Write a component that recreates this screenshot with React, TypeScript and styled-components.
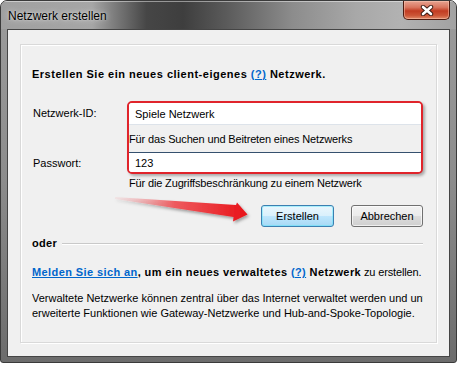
import React from "react";
import styled, { createGlobalStyle } from "styled-components";

const Global = createGlobalStyle`
  html, body { margin: 0; padding: 0; background: #ffffff; }
  body { font-family: "Liberation Sans", Arial, sans-serif; }
`;

const Window = styled.div`
  position: relative;
  box-sizing: border-box;
  width: 457px;
  height: 363px;
  border: 1px solid #3a3a3a;
  border-radius: 7px 7px 3px 3px;
  background: linear-gradient(180deg, #9c9c9c 0%, #8c8c8c 50%, #6c6c6c 100%);
  display: flex;
  flex-direction: column;
  overflow: hidden;
`;

const TitleBar = styled.div`
  height: 28px;
  flex: none;
  display: flex;
  align-items: flex-start;
  justify-content: space-between;
  padding: 0 6px 0 7px;
  background: linear-gradient(
    90deg,
    #a0a0a0 0%,
    #a6a6a6 20%,
    #7c7c7c 25%,
    #464646 32%,
    #3e3e3e 40%,
    #5c5c5c 50%,
    #8c8c8c 64%,
    #a8a8a8 78%,
    #b2b2b2 88%,
    #a2a2a2 100%
  );
  box-shadow: inset 0 1px 0 rgba(255, 255, 255, 0.45);
`;

const Title = styled.div`
  margin-top: 7px;
  font-family: "Liberation Sans", Arial, sans-serif;
  font-size: 12px;
  line-height: 16px;
  color: #000;
  text-shadow: 0 0 6px rgba(255, 255, 255, 0.7), 0 0 2px rgba(255, 255, 255, 0.5);
`;

const CloseButton = styled.div`
  box-sizing: border-box;
  width: 47px;
  height: 19px;
  display: flex;
  align-items: center;
  justify-content: center;
  border: 1px solid #4e1b10;
  border-top: none;
  border-radius: 0 0 5px 5px;
  background: linear-gradient(180deg, #e7a391 0%, #d9765f 35%, #c23c22 55%, #cc5536 80%, #e08a6a 100%);
  box-shadow: inset 0 0 0 1px rgba(255, 210, 190, 0.45);
`;

const Body = styled.div`
  flex: 1;
  min-height: 0;
  display: flex;
  padding: 0 6px 5px 6px;
`;

const Client = styled.div`
  flex: 1;
  min-width: 0;
  display: flex;
  flex-direction: column;
  background: #f0f0f0;
  border: 1px solid #454545;
  padding: 14px 12px 13px 12px;
`;

const Panel = styled.div`
  position: relative;
  flex: 1;
  min-width: 0;
  display: flex;
  flex-direction: column;
  border: 1px solid #d9d9d9;
  box-shadow: inset 1px 1px 0 #ffffff, 1px 1px 0 #ffffff;
  padding: 22px 13px 0 11px;
  font-size: 11px;
  line-height: 14px;
  letter-spacing: -0.15px;
  color: #000;
`;

const Heading = styled.div`
  font-weight: bold;
  letter-spacing: 0.5px;
  white-space: nowrap;
`;

const Link = styled.a`
  color: #0066cc;
  text-decoration: underline;
  cursor: pointer;
`;

const Form = styled.div`
  margin-top: 20px;
  display: grid;
  grid-template-columns: 95px minmax(0, 1fr);
  grid-template-rows: 24px 27px 22px auto;
`;

const Label = styled.div<{ $row: number }>`
  grid-column: 1;
  grid-row: ${(p) => p.$row};
  align-self: center;
  padding-left: 1px;
  letter-spacing: 0;
`;

const Highlight = styled.div`
  grid-column: 2;
  grid-row: 1 / 4;
  min-width: 0;
  display: flex;
  flex-direction: column;
  border: 2px solid #e0242b;
  border-radius: 5px;
  box-shadow: 2px 2px 3px rgba(0, 0, 0, 0.3);
  overflow: hidden;
  background: #f0f0f0;
`;

const Input = styled.input<{ $top?: boolean }>`
  box-sizing: border-box;
  width: 100%;
  height: ${(p) => (p.$top ? "22px" : "20px")};
  margin: 0;
  padding: 0 6px;
  border: none;
  border-bottom: ${(p) => (p.$top ? "1px solid #dde3ea" : "none")};
  border-top: ${(p) => (p.$top ? "none" : "1px solid #35506e")};
  background: #ffffff;
  font-family: "Liberation Sans", Arial, sans-serif;
  font-size: 11px;
  color: #000;
  outline: none;
`;

const InnerHint = styled.div`
  height: 27px;
  display: flex;
  align-items: center;
  white-space: nowrap;
`;

const Hint = styled.div`
  grid-column: 2;
  grid-row: 4;
  margin-top: 2px;
  padding-left: 2px;
  white-space: nowrap;
`;

const ButtonRow = styled.div`
  margin-top: 15px;
  display: flex;
  justify-content: flex-end;
  gap: 17px;
`;

const Button = styled.button<{ $default?: boolean; $w: number }>`
  box-sizing: border-box;
  width: ${(p) => p.$w}px;
  height: 22px;
  margin: 0;
  padding: 0;
  border-radius: 3px;
  border: 1px solid ${(p) => (p.$default ? "#3c7fb1" : "#707070")};
  background: ${(p) =>
    p.$default
      ? "linear-gradient(180deg, #eaf6fd 0%, #d9f0fc 50%, #bee6fd 51%, #a7d9f5 100%)"
      : "linear-gradient(180deg, #f2f2f2 0%, #ebebeb 50%, #dddddd 51%, #cfcfcf 100%)"};
  box-shadow: inset 0 0 0 1px ${(p) => (p.$default ? "#48e6fa66" : "#ffffffaa")};
  font-family: "Liberation Sans", Arial, sans-serif;
  font-size: 11px;
  color: #000;
`;

const Separator = styled.div`
  margin-top: 9px;
  display: flex;
  align-items: center;
  gap: 5px;
  font-weight: bold;
  letter-spacing: 0.3px;
`;

const Rule = styled.div`
  flex: 1;
  height: 1px;
  background: #c9c9c9;
  box-shadow: 0 1px 0 #ffffff;
`;

const Managed = styled.div`
  margin-top: 15px;
  white-space: nowrap;
`;

const Strong = styled.b`
  font-weight: bold;
  letter-spacing: 0.4px;
`;

const Para = styled.div`
  margin-top: 12px;
  line-height: 15px;
  letter-spacing: 0;
`;

const ParaLine = styled.div`
  white-space: nowrap;
  overflow: hidden;
`;

const ArrowLayer = styled.svg`
  position: absolute;
  left: 92px;
  top: 148px;
  overflow: visible;
  pointer-events: none;
`;

export default function App() {
  return (
    <>
      <Global />
      <Window>
        <TitleBar>
          <Title>Netzwerk erstellen</Title>
          <CloseButton>
            <svg width="14" height="11" viewBox="0 0 14 11">
              <path d="M3 2 L11 9 M11 2 L3 9" stroke="#3a1a12" strokeWidth="4.4" strokeLinecap="round" />
              <path d="M3 2 L11 9 M11 2 L3 9" stroke="#ffffff" strokeWidth="2.6" strokeLinecap="round" />
            </svg>
          </CloseButton>
        </TitleBar>
        <Body>
          <Client>
            <Panel>
              <Heading>
                Erstellen Sie ein neues client-eigenes <Link>(?)</Link> Netzwerk.
              </Heading>
              <Form>
                <Label $row={1}>Netzwerk-ID:</Label>
                <Label $row={3}>Passwort:</Label>
                <Highlight>
                  <Input $top readOnly value="Spiele Netzwerk" />
                  <InnerHint>Für das Suchen und Beitreten eines Netzwerks</InnerHint>
                  <Input readOnly value="123" />
                </Highlight>
                <Hint>Für die Zugriffsbeschränkung zu einem Netzwerk</Hint>
              </Form>
              <ButtonRow>
                <Button $default $w={73}>Erstellen</Button>
                <Button $w={72}>Abbrechen</Button>
              </ButtonRow>
              <Separator>
                oder
                <Rule />
              </Separator>
              <Managed>
                <Link>
                  <Strong>Melden Sie sich an</Strong>
                </Link>
                <Strong>, um ein neues verwaltetes </Strong>
                <Link>
                  <Strong>(?)</Strong>
                </Link>
                <Strong> Netzwerk</Strong> zu erstellen.
              </Managed>
              <Para>
                <ParaLine>
                  Verwaltete Netzwerke können zentral über das Internet verwaltet werden und unterstützen
                </ParaLine>
                <ParaLine>erweiterte Funktionen wie Gateway-Netzwerke und Hub-and-Spoke-Topologie.</ParaLine>
              </Para>
              <ArrowLayer width="140" height="30" viewBox="113 193 140 30">
                <defs>
                  <linearGradient id="arrowFill" x1="0" y1="0" x2="1" y2="0">
                    <stop offset="0" stopColor="#f4b7bb" stopOpacity="0.2" />
                    <stop offset="0.45" stopColor="#ee5a5e" />
                    <stop offset="1" stopColor="#e81218" />
                  </linearGradient>
                  <filter id="arrowShadow" x="-10%" y="-50%" width="130%" height="220%">
                    <feDropShadow dx="1.5" dy="2" stdDeviation="1.6" floodColor="#000" floodOpacity="0.35" />
                  </filter>
                </defs>
                <polygon
                  points="115,197 236,205 237,202.5 247.5,214.5 233,221.5 233.5,217 115,199"
                  fill="url(#arrowFill)"
                  filter="url(#arrowShadow)"
                />
              </ArrowLayer>
            </Panel>
          </Client>
        </Body>
      </Window>
    </>
  );
}
